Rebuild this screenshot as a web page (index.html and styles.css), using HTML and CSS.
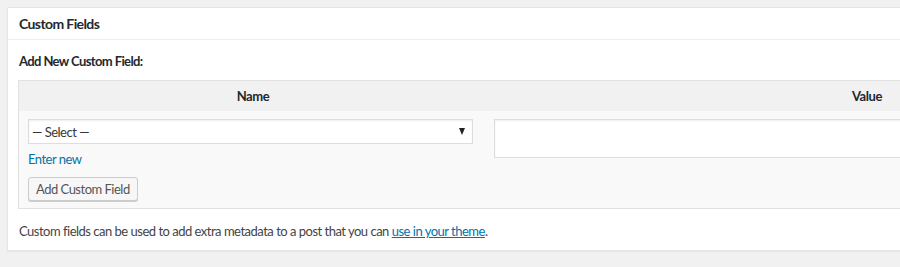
FILE: index.html
```html
<!DOCTYPE html>
<html>
<head>
<meta charset="utf-8">
<link rel="stylesheet" href="styles.css">
</head>
<body>
<div class="postbox">
  <h2 class="hndle">Custom Fields</h2>
  <div class="inside">
    <p class="addnew">Add New Custom Field:</p>
    <table class="meta">
      <thead>
        <tr><th class="col-name">Name</th><th class="col-value">Value</th></tr>
      </thead>
      <tbody>
        <tr>
          <td class="cell-name">
            <div class="select"><span>— Select —</span><span class="arrow"></span></div>
            <a class="enter" href="#">Enter new</a>
            <div class="btnrow"><span class="button">Add Custom Field</span></div>
          </td>
          <td class="cell-value"><div class="textarea"></div></td>
        </tr>
      </tbody>
    </table>
    <p class="note">Custom fields can be used to add extra metadata to a post that you can <a href="#">use in your theme</a>.</p>
  </div>
</div>
</body>
</html>
```
FILE: styles.css
```css
html, body { margin: 0; padding: 0; }
body {
  background: #f1f1f1;
  font-family: Lato, "Liberation Sans", sans-serif;
  font-size: 13px;
  letter-spacing: -0.5px;
  color: #444;
  padding: 7px 0 0 7px;
  overflow: hidden;
  height: 260px;
}
.postbox {
  width: 1300px;
  background: #fff;
  border: 1px solid #e5e5e5;
  box-shadow: 0 1px 1px rgba(0,0,0,.04);
}
.hndle {
  margin: 0;
  height: 31px;
  line-height: 31px;
  padding: 0 11px;
  font-size: 14px;
  font-weight: 700;
  letter-spacing: -0.6px;
  color: #23282d;
  border-bottom: 1px solid #eee;
}
.inside { padding: 0 10px; }
.addnew {
  margin: 0;
  height: 40px;
  line-height: 42px;
  padding-left: 1px;
  font-weight: 700;
  letter-spacing: -0.6px;
  color: #23282d;
}
.meta {
  border: 1px solid #e1e1e1;
  border-collapse: separate;
  border-spacing: 0;
  background: #f9f9f9;
  width: 1230px;
  table-layout: fixed;
}
.meta thead th {
  background: #f1f1f1;
  height: 30px;
  padding: 0;
  font-weight: 700;
  letter-spacing: -0.4px;
  color: #23282d;
  text-align: center;
}
.col-name { width: 468px; }
.meta td { vertical-align: top; padding: 0; }
.cell-name { padding: 8px 14px 7px 9px !important; }
.cell-value { padding: 8px 0 0 7px !important; }
.select {
  height: 23px;
  border: 1px solid #ddd;
  box-shadow: inset 0 1px 2px rgba(0,0,0,.07);
  background: #fff;
  display: flex;
  align-items: center;
  justify-content: space-between;
  padding: 0 6px 0 3px;
  color: #32373c;
}
.arrow {
  width: 0; height: 0;
  border-left: 3.5px solid transparent;
  border-right: 3.5px solid transparent;
  border-top: 7px solid #222;
  margin-right: 1px;
}
.enter {
  display: block;
  color: #0073aa;
  text-decoration: none;
  margin-top: 5px;
  line-height: 20px;
}
.btnrow { margin-top: 8px; line-height: 0; }
.button {
  display: inline-block;
  height: 22px;
  line-height: 22px;
  padding: 0 7px;
  border: 1px solid #ccc;
  border-radius: 3px;
  background: #f7f7f7;
  box-shadow: 0 1px 0 #ccc;
  color: #555;
}
.textarea {
  height: 37px;
  border: 1px solid #ddd;
  box-shadow: inset 0 1px 2px rgba(0,0,0,.07);
  background: #fff;
}
.note {
  margin: 0;
  padding: 12px 0 9px 1px;
  line-height: 20px;
  color: #444;
}
.note a { color: #0073aa; text-decoration: underline; }
```
